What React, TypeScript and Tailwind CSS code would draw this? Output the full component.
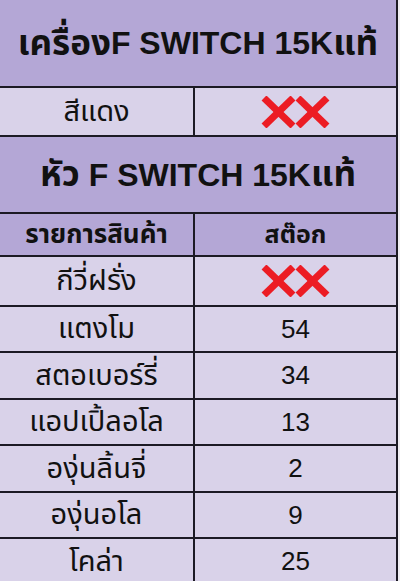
import React from "react";

const font = { fontFamily: '"Liberation Sans", "Noto Sans Thai", "Noto Sans Thai Looped", "Noto Sans", sans-serif' };

function Crosses() {
  return (
    <svg width="70" height="32" viewBox="0 0 70 32">
      <g stroke="#ec1c24" strokeWidth="7" strokeLinecap="butt">
        <line x1="3" y1="2" x2="32" y2="30" />
        <line x1="32" y1="2" x2="3" y2="30" />
        <line x1="37" y1="2" x2="66" y2="30" />
        <line x1="66" y1="2" x2="37" y2="30" />
      </g>
    </svg>
  );
}

const items: { name: string; stock: number | null; h: string }[] = [
  { name: "กีวี่ฝรั่ง", stock: null, h: "h-[50px]" },
  { name: "แตงโม", stock: 54, h: "h-[46px]" },
  { name: "สตอเบอร์รี่", stock: 34, h: "h-[47px]" },
  { name: "แอปเปิ้ลอโล", stock: 13, h: "h-[46px]" },
  { name: "องุ่นลิ้นจี่", stock: 2, h: "h-[47px]" },
  { name: "องุ่นอโล", stock: 9, h: "h-[46px]" },
  { name: "โคล่า", stock: 25, h: "h-[47px]" },
];

function Row({ left, right, h, head }: { left: React.ReactNode; right: React.ReactNode; h: string; head?: boolean }) {
  return (
    <div className={`grid grid-cols-[195px_1fr] border-b-2 border-[#1c1a24] ${h} ${head ? "bg-[#b4a7d6] font-bold" : "bg-[#d9d2e9]"}`}>
      <div className={`flex items-center justify-center border-r-2 border-[#1c1a24] ${head ? "text-[26px]" : "text-[29px]"}`}>{left}</div>
      <div className={`flex items-center justify-center ${head ? "text-[25px]" : "text-[26px]"}`}>{right}</div>
    </div>
  );
}

export default function App() {
  return (
    <div className="w-[400px] h-[581px] overflow-hidden bg-[#efedf2] text-[#111111]" style={font}>
      <div className="w-[398px] border-r-2 border-[#1c1a24]">
        <div className="h-[88px] flex items-center justify-center bg-[#b4a7d6] border-b-2 border-[#1c1a24] text-[32px] font-bold whitespace-nowrap">
          <span className="text-[35px]">เครื่อง</span>F SWITCH 15K<span className="text-[35px]">แท้</span>
        </div>
        <Row left="สีแดง" right={<Crosses />} h="h-[49px]" />
        <div className="h-[77px] flex items-center justify-center bg-[#b4a7d6] border-b-2 border-[#1c1a24] text-[32px] font-bold whitespace-nowrap">
          <span className="text-[35px]">หัว</span>&nbsp;F SWITCH 15K<span className="text-[35px]">แท้</span>
        </div>
        <Row left="รายการสินค้า" right="สต๊อก" h="h-[43px]" head />
        {items.map((it) => (
          <Row key={it.name} left={it.name} right={it.stock === null ? <Crosses /> : it.stock} h={it.h} />
        ))}
      </div>
    </div>
  );
}
